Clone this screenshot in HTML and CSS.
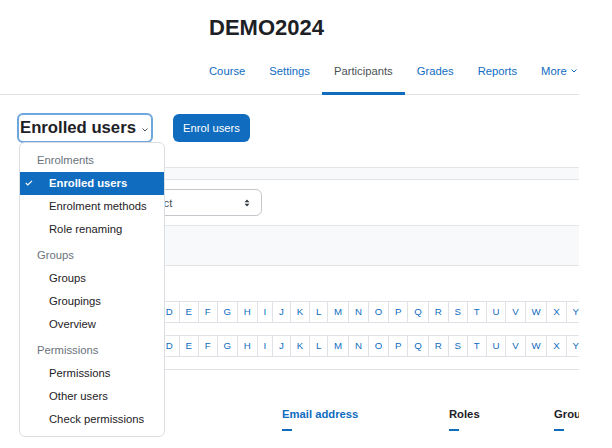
FILE: index.html
```html
<!DOCTYPE html>
<html lang="en">
<head>
<meta charset="utf-8">
<title>Participants: DEMO2024</title>
<link rel="stylesheet" href="styles.css">
</head>
<body>
<div class="page">
  <header class="page-header">
    <h1 class="title">DEMO2024</h1>
  </header>
  <nav class="secnav">
    <ul class="tabs">
      <li><a class="tab">Course</a></li>
      <li><a class="tab">Settings</a></li>
      <li><a class="tab active">Participants</a></li>
      <li><a class="tab">Grades</a></li>
      <li><a class="tab">Reports</a></li>
      <li><a class="tab">More <svg class="tab-caret" width="6" height="4" viewBox="0 0 6 4"><path d="M0.5 0.5 L3 3 L5.5 0.5" fill="none" stroke="#0f6cbf" stroke-width="1"/></svg></a></li>
    </ul>
  </nav>

  <div class="toolbar">
    <div class="urlselect">
      <span class="urlselect-label">Enrolled users</span>
      <svg class="urlselect-caret" width="6" height="4" viewBox="0 0 6 4"><path d="M0.5 0.5 L3 3 L5.5 0.5" fill="none" stroke="#495057" stroke-width="1"/></svg>
    </div>
    <button class="btn-primary">Enrol users</button>
  </div>

  <div class="band band-thin"></div>

  <div class="filter-row">
    <div class="filter-select">
      <span>Select</span>
      <svg class="updown" width="6" height="8" viewBox="0 0 6 8"><path d="M0.5 3.2 L3 0.5 L5.5 3.2 Z M0.5 4.8 L3 7.5 L5.5 4.8 Z" fill="#343a40"/></svg>
    </div>
  </div>

  <div class="band band-tall"></div>

  <div class="initials">
    <div class="initials-row">
      <span class="initials-label">First name</span>
      <a class="pg-cell">All</a><a class="pg-cell">A</a><a class="pg-cell">B</a><a class="pg-cell">C</a><a class="pg-cell">D</a><a class="pg-cell">E</a><a class="pg-cell">F</a><a class="pg-cell">G</a><a class="pg-cell">H</a><a class="pg-cell">I</a><a class="pg-cell">J</a><a class="pg-cell">K</a><a class="pg-cell">L</a><a class="pg-cell">M</a><a class="pg-cell">N</a><a class="pg-cell">O</a><a class="pg-cell">P</a><a class="pg-cell">Q</a><a class="pg-cell">R</a><a class="pg-cell">S</a><a class="pg-cell">T</a><a class="pg-cell">U</a><a class="pg-cell">V</a><a class="pg-cell">W</a><a class="pg-cell">X</a><a class="pg-cell">Y</a><a class="pg-cell">Z</a>
    </div>
    <div class="initials-row">
      <span class="initials-label">Last name</span>
      <a class="pg-cell">All</a><a class="pg-cell">A</a><a class="pg-cell">B</a><a class="pg-cell">C</a><a class="pg-cell">D</a><a class="pg-cell">E</a><a class="pg-cell">F</a><a class="pg-cell">G</a><a class="pg-cell">H</a><a class="pg-cell">I</a><a class="pg-cell">J</a><a class="pg-cell">K</a><a class="pg-cell">L</a><a class="pg-cell">M</a><a class="pg-cell">N</a><a class="pg-cell">O</a><a class="pg-cell">P</a><a class="pg-cell">Q</a><a class="pg-cell">R</a><a class="pg-cell">S</a><a class="pg-cell">T</a><a class="pg-cell">U</a><a class="pg-cell">V</a><a class="pg-cell">W</a><a class="pg-cell">X</a><a class="pg-cell">Y</a><a class="pg-cell">Z</a>
    </div>
  </div>

  <div class="divider"></div>

  <div class="thead">
    <div class="th th-name"><span class="th-label link">First name / Last name</span><span class="dash"></span></div>
    <div class="th th-email"><span class="th-label link">Email address</span><span class="dash"></span></div>
    <div class="th th-roles"><span class="th-label">Roles</span><span class="dash"></span></div>
    <div class="th th-groups"><span class="th-label">Groups</span><span class="dash"></span></div>
  </div>
</div>

<ul class="menu">
  <li class="menu-head">Enrolments</li>
  <li class="menu-item selected"><svg class="check" width="8" height="6" viewBox="0 0 8 6"><path d="M0.8 3 L2.8 5 L7 0.8" fill="none" stroke="#ffffff" stroke-width="1.1"/></svg>Enrolled users</li>
  <li class="menu-item">Enrolment methods</li>
  <li class="menu-item">Role renaming</li>
  <li class="menu-head gap">Groups</li>
  <li class="menu-item">Groups</li>
  <li class="menu-item">Groupings</li>
  <li class="menu-item">Overview</li>
  <li class="menu-head gap">Permissions</li>
  <li class="menu-item">Permissions</li>
  <li class="menu-item">Other users</li>
  <li class="menu-item">Check permissions</li>
</ul>
</body>
</html>
```
FILE: styles.css
```css
* { box-sizing: border-box; }
html, body { margin: 0; padding: 0; }
body {
  font-family: "Liberation Sans", Arial, sans-serif;
  color: #1d2125;
  background: #ffffff;
  width: 612px;
  height: 448px;
  overflow: hidden;
  position: relative;
}
.page { width: 579px; overflow: hidden; height: 448px; }

.page-header { height: 48px; padding: 15px 0 0 209px; }
.title { margin: 0; font-size: 22px; line-height: 26px; font-weight: 700; color: #1d2125; }

.tabs {
  list-style: none;
  margin: 0;
  padding: 0 0 0 197px;
  display: flex;
  height: 47px;
  border-bottom: 1px solid #dee2e6;
}
.tab {
  display: block;
  height: 47px;
  padding: 14.5px 12px 0;
  font-size: 11.25px;
  line-height: 17px;
  color: #0f6cbf;
  border-bottom: 3px solid transparent;
  white-space: nowrap;
}
.tab.active { color: #4b5157; border-bottom-color: #0f6cbf; }
.tab-caret { margin-left: 1px; vertical-align: 2px; }

.toolbar {
  display: flex;
  align-items: center;
  gap: 20px;
  margin: 18px 0 0 17px;
  height: 30px;
}
.urlselect {
  width: 136px;
  height: 30px;
  border: 2px solid #6ea6dd;
  border-radius: 6px;
  display: flex;
  align-items: center;
  justify-content: space-between;
  padding: 0 3px 0 1px;
}
.urlselect-label { font-size: 16.7px; font-weight: 700; color: #1d2125; white-space: nowrap; }
.urlselect-caret { margin-top: 3px; }
.btn-primary {
  width: 77px;
  height: 28px;
  border: 0;
  border-radius: 6px;
  background: #0f6cbf;
  color: #ffffff;
  font-family: inherit;
  font-size: 11.25px;
  padding: 0;
}

.band {
  margin-left: 24px;
  background: #f8f9fa;
  border-top: 1px solid #e2e5e8;
  border-bottom: 1px solid #e2e5e8;
}
.band-thin { margin-top: 24px; height: 13px; }
.band-tall { margin-top: 9px; height: 41px; }

.filter-row { margin-top: 9px; padding-left: 130px; }
.filter-select {
  width: 132px;
  height: 27px;
  border: 1px solid #c4c8cc;
  border-radius: 6px;
  display: flex;
  align-items: center;
  justify-content: space-between;
  padding: 0 11px 0 10px;
  font-size: 11.25px;
  color: #495057;
}

.initials { margin-top: 35px; }
.initials-row { display: flex; height: 22px; }
.initials-row + .initials-row { margin-top: 12px; }
.initials-label { flex: none; width: 57px; margin-left: 20px; font-size: 10px; line-height: 22px; white-space: nowrap; }
.pg-cell {
  display: block;
  height: 22px;
  font-size: 9.7px;
  line-height: 20px;
  padding: 0 5.9px;
  border: 1px solid #dee2e6;
  color: #0f6cbf;
  flex: none;
}
.pg-cell + .pg-cell { margin-left: -1px; }

.divider { margin: 12px 0 0 20px; border-top: 1px solid #dee2e6; }

.thead { display: flex; margin-top: 35.5px; }
.th { display: flex; flex-direction: column; align-items: flex-start; flex: none; }
.th-name { width: 282px; padding-left: 30px; }
.th-email { width: 167px; }
.th-roles { width: 105px; }
.th-groups { width: 60px; }
.th-label { font-size: 11.25px; line-height: 17px; font-weight: 700; color: #1d2125; white-space: nowrap; }
.th-label.link { color: #0f6cbf; }
.dash { display: block; width: 10px; height: 2px; margin-top: 6px; background: #0f6cbf; }

.menu {
  position: absolute;
  left: 19px;
  top: 142px;
  width: 146px;
  height: 295px;
  margin: 0;
  padding: 5.5px 0 6px;
  list-style: none;
  background: #ffffff;
  border: 1px solid #dadde1;
  border-radius: 6px;
  font-size: 11.25px;
}
.menu-head { line-height: 23px; padding-left: 17px; color: #6a737b; }
.menu-head.gap { margin-top: 3px; }
.menu-item { position: relative; line-height: 23px; padding-left: 29px; color: #1d2125; white-space: nowrap; }
.menu-item.selected { background: #0f6cbf; color: #ffffff; font-weight: 700; }
.check { position: absolute; left: 5px; top: 8.5px; }
```
